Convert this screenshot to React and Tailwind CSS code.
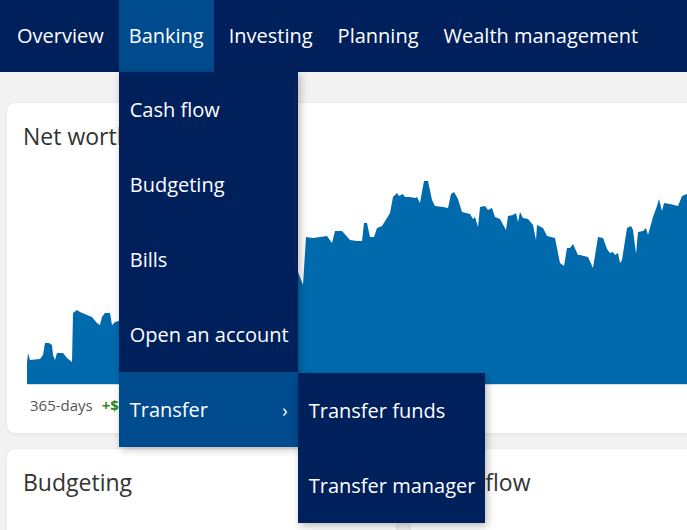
import React from "react";

const pts = [
[27,363],[28,353],[30,360],[40,359],[43,355],[45,343],[49,343],[52,345],[53,355],[55,360],[57,353],[63,353],[67,358],[72,362],[73,313],[77,310],[80,312],[87,315],[92,317],[97,323],[100,325],[102,317],[105,313],[110,313],[112,325],[115,322],[130,318],[150,300],[170,305],[190,290],[210,295],[230,280],[250,285],[270,275],[290,270],[298,272],[303,285],[306,237],[313,238],[327,236],[332,243],[335,231],[342,231],[350,240],[357,241],[362,241],[364,223],[367,223],[370,237],[374,237],[377,228],[382,226],[387,218],[390,213],[393,197],[397,193],[399,196],[403,194],[405,197],[410,197],[415,198],[417,197],[420,203],[424,181],[428,181],[432,200],[435,206],[443,207],[448,208],[451,194],[454,192],[458,199],[462,212],[470,214],[473,219],[475,217],[478,227],[480,207],[485,206],[488,210],[492,208],[495,217],[500,219],[506,230],[508,216],[513,215],[516,213],[518,222],[520,212],[523,218],[528,219],[533,225],[536,240],[537,225],[543,228],[547,236],[555,238],[557,248],[560,263],[564,266],[567,248],[570,248],[573,244],[578,255],[580,255],[588,257],[593,268],[598,237],[603,238],[607,249],[610,253],[613,252],[615,255],[618,253],[620,263],[622,260],[627,228],[631,226],[633,230],[636,254],[638,232],[643,231],[646,228],[648,235],[653,217],[657,206],[659,199],[662,211],[664,203],[670,204],[678,206],[682,196],[687,194],[700,195],[720,200],[740,190],[760,195],[780,192]
];

const d = "M27,384 " + pts.map(([x, y]) => `L${x},${y}`).join(" ") + " L780,384 Z";

const navItems = ["Overview", "Banking", "Investing", "Planning", "Wealth management"];
const menu = ["Cash flow", "Budgeting", "Bills", "Open an account"];

export default function App() {
  return (
    <div className="w-[687px] h-[530px] overflow-hidden bg-[#f2f2f2] relative font-['Open_Sans',sans-serif]">
      <nav className="h-[72px] bg-[#00205b] flex pl-[7px] gap-[5px] relative z-10">
        {navItems.map((n) => (
          <div
            key={n}
            className={`relative h-full flex items-center px-[10px] text-white text-[20px] ${n === "Banking" ? "bg-[#004b8d]" : ""}`}
          >
            {n}
            {n === "Banking" && (
              <div className="absolute left-0 top-[72px] w-[179px] bg-[#00205b] shadow-[2px_2px_8px_rgba(0,0,0,0.28)]">
                {menu.map((m) => (
                  <div key={m} className="h-[75px] flex items-center px-[11px] text-[20px] text-white whitespace-nowrap">
                    {m}
                  </div>
                ))}
                <div className="relative h-[75px] flex items-center justify-between pl-[11px] pr-[10px] bg-[#004b8d] text-white text-[20px]">
                  <span>Transfer</span>
                  <span className="text-[18px] leading-none">›</span>
                  <div className="absolute left-[179px] top-[1px] w-[187px] bg-[#00205b] shadow-[2px_3px_8px_rgba(0,0,0,0.28)]">
                    <div className="h-[75px] flex items-center px-[11px] whitespace-nowrap">Transfer funds</div>
                    <div className="h-[75px] flex items-center px-[11px] whitespace-nowrap">Transfer manager</div>
                  </div>
                </div>
              </div>
            )}
          </div>
        ))}
      </nav>
      <main className="w-[807px] px-[7px] pt-[31px] flex flex-col gap-[16px]">
        <section className="bg-white rounded-[8px] shadow-[0_1px_4px_rgba(0,0,0,0.08)] px-[20px] pt-[18px] pb-[18px]">
          <h2 className="text-[23px] leading-[30px] text-[#333] -ml-[4px]">Net worth</h2>
          <div className="mt-[19px] h-[215px] border-b border-[#cfdbe6]">
            <svg width="753" height="214" viewBox="27 170 753 214" className="block">
              <path d={d} fill="#006aad" />
            </svg>
          </div>
          <div className="mt-[10px] text-[15px] leading-[20px] text-[#555] flex gap-[9px] pl-[3px]">
            <span>365-days</span>
            <span className="font-bold text-[#2e8b1f]">+$12,480</span>
          </div>
        </section>
        <div className="grid grid-cols-2 gap-[15px]">
          <section className="bg-white rounded-[8px] shadow-[0_1px_4px_rgba(0,0,0,0.08)] px-[16px] pt-[18px] h-[120px]">
            <h2 className="text-[23px] leading-[30px] text-[#333]">Budgeting</h2>
          </section>
          <section className="bg-white rounded-[8px] shadow-[0_1px_4px_rgba(0,0,0,0.08)] px-[16px] pt-[18px] h-[120px]">
            <h2 className="text-[23px] leading-[30px] text-[#333]">Cash flow</h2>
          </section>
        </div>
      </main>
    </div>
  );
}
